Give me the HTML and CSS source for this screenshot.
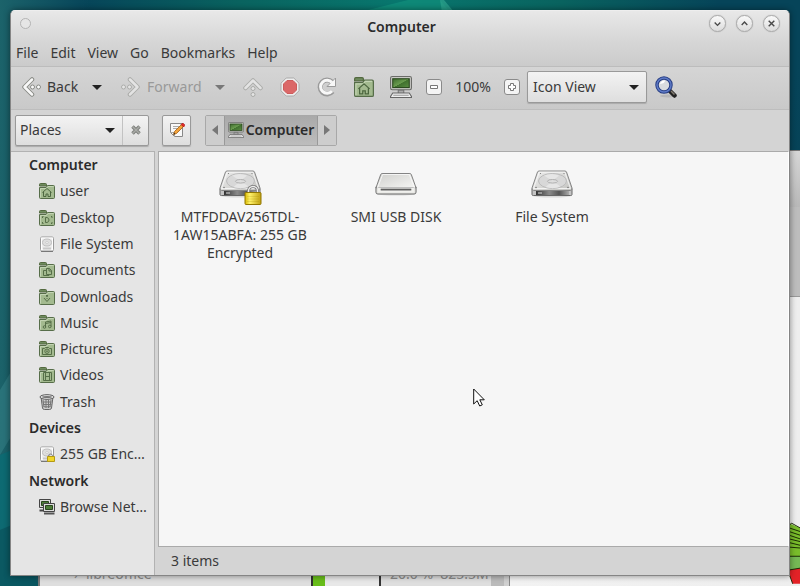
FILE: index.html
```html
<!DOCTYPE html>
<html lang="en">
<head>
<meta charset="utf-8">
<title>Computer</title>
<link rel="stylesheet" href="styles.css">
</head>
<body>
<svg class="defs" aria-hidden="true">
  <defs>
    <linearGradient id="face" x1="0" y1="0" x2="1" y2="1"><stop offset="0" stop-color="#ececec"/><stop offset=".5" stop-color="#d9d9d7"/><stop offset="1" stop-color="#c3c3c0"/></linearGradient>
    <linearGradient id="pale" x1="0" y1="0" x2="1" y2="1"><stop offset="0" stop-color="#cfcfcc"/><stop offset="1" stop-color="#f6f6f4"/></linearGradient>
    <linearGradient id="front" x1="0" y1="0" x2="1" y2="0"><stop offset="0" stop-color="#333"/><stop offset=".4" stop-color="#8a8a8a"/><stop offset=".7" stop-color="#555"/><stop offset="1" stop-color="#aaa"/></linearGradient>
    <linearGradient id="gold" x1="0" y1="0" x2="1" y2="0"><stop offset="0" stop-color="#d8b800"/><stop offset=".3" stop-color="#fff26a"/><stop offset="1" stop-color="#c0a010"/></linearGradient>
    <linearGradient id="screen" x1="0" y1="0" x2="1" y2="1"><stop offset="0" stop-color="#3c6a2c"/><stop offset=".5" stop-color="#6b9d50"/><stop offset=".52" stop-color="#40702e"/><stop offset="1" stop-color="#5a8d42"/></linearGradient>
    <symbol id="folder" viewBox="0 0 16 16">
      <path d="M.5 3V1.500Q.5.5 1.500.5h5Q7.500.5 7.500 1.500V3z" fill="#6f8b5e" stroke="#53693f"/>
      <path d="M.5 4.500 7 4.500 8.500 2.500H14.500Q15.500 2.500 15.500 3.500V14.500Q15.500 15.500 14.500 15.500H1.500Q.5 15.500.5 14.500z" fill="#a3ba8f" stroke="#566d49"/>
      <path d="M1.500 14.500V5.500H7.500L9 3.500h5.500" fill="none" stroke="#c3d4b3"/>
    </symbol>
    <symbol id="monitor" viewBox="0 0 20 20">
      <rect x=".5" y=".5" width="19" height="12" rx="1.500" fill="#c9c9c5" stroke="#6b6c69"/>
      <rect x="2.500" y="2.500" width="15" height="8" fill="url(#screen)" stroke="#2c4a20"/>
      <path d="M7.500 13h5v3h-5z" fill="#aaa" stroke="#777"/>
      <path d="M2.500 15.500h15l2 3v1H.5v-1z" fill="#eee" stroke="#666"/><path d="M3 17.500h14" stroke="#999"/>
    </symbol>
    <symbol id="hdd" viewBox="0 0 42 28">
      <ellipse cx="21" cy="25.500" rx="20" ry="2" fill="#bbb" opacity=".5"/>
      <path d="M1 18.500h40v6q0 1-1.500 1H2.500q-1.500 0-1.500-1z" fill="#c4c4c4" stroke="#666"/>
      <path d="M8 1h26q1 0 1.500 1L41 18q0 2.500-1.500 2.500H2.500Q1 20.500 1 18L6.500 2q.5-1 1.500-1z" fill="url(#face)" stroke="#858585"/>
      <path d="M8.200 2.200h25.600L39.500 18.500H2.500z" fill="none" stroke="#fafafa" stroke-opacity=".8"/>
      <ellipse cx="21.500" cy="11" rx="14" ry="7.500" fill="#d8d8d8" stroke="#bbb"/>
      <path d="M21.500 11 13 5.500q8-3 15 0zM21.500 11l8 5.500q-7 3-15 .5z" fill="#e6e6e6"/>
      <ellipse cx="21.500" cy="11.300" rx="5" ry="1.800" fill="#dedede" stroke="#b0b0b0"/>
      <path d="M5 21h33v4H5z" fill="url(#front)"/><path d="M7 23h4" stroke="#ddd"/>
      <circle cx="9.500" cy="3.500" r=".6" fill="#777"/><circle cx="33" cy="3.500" r=".6" fill="#777"/><circle cx="37" cy="17.500" r=".7" fill="#666"/><circle cx="5" cy="17.500" r=".7" fill="#666"/>
    </symbol>
    <symbol id="drive" viewBox="0 0 16 16">
      <rect x="1.500" y="1" width="13" height="14" rx="1.500" fill="#eee" stroke="#999"/>
      <rect x="2.500" y="2" width="11" height="12" fill="none" stroke="#fff"/>
      <ellipse cx="8" cy="6.500" rx="4.500" ry="3.500" fill="#dedede" stroke="#c0c0c0"/><ellipse cx="8" cy="6.500" rx="1.500" ry="1" fill="#eee" stroke="#bbb" stroke-width=".5"/>
      <path d="M4 11.500h8v2H4z" fill="#c8c8c8"/><path d="M2 15.300h12" stroke="#666"/>
    </symbol>
    <symbol id="lock" viewBox="0 0 18 20">
      <path d="M4.500 9V6a4.500 4.500 0 0 1 9 0v3" fill="none" stroke="#777" stroke-width="3"/>
      <path d="M4.500 9V6a4.500 4.500 0 0 1 9 0v3" fill="none" stroke="#eee" stroke-width="1.400"/>
      <rect x="1" y="7.500" width="16" height="12" rx="1" fill="url(#gold)" stroke="#917600"/>
      <path d="M3 11.500h12M3 14h12M3 16.500h12" stroke="#998000" stroke-opacity=".2"/>
    </symbol>
    <symbol id="arrow" viewBox="0 0 20 20">
      <path d="M11 2.500 3.500 10l7.500 7.500" fill="none" stroke="#888a85" stroke-width="4.500" stroke-linecap="round" stroke-linejoin="round"/>
      <path d="M11 2.500 3.500 10l7.500 7.500" fill="none" stroke="#f8f8f8" stroke-width="2.500" stroke-linecap="round" stroke-linejoin="round"/>
      <circle cx="11.500" cy="10" r="2" fill="#fafafa" stroke="#888a85"/><circle cx="17.500" cy="10" r="2" fill="#fafafa" stroke="#888a85"/>
    </symbol>
    <symbol id="house" viewBox="0 0 16 16"><path d="M3.500 9.500 8 5.500l4.500 4M4.500 9v4.500H7V11h2v2.500h2.500V9" fill="none" stroke="#4d6740"/></symbol>
  </defs>
</svg>

<svg class="rays" viewBox="0 0 800 586" preserveAspectRatio="none" aria-hidden="true">
  <path d="M360 12 408 0h32l10 12z" fill="#11907c" opacity=".7"/>
  <path d="M440 0h4l10 12h-12z" fill="#2da58e" opacity=".7"/>
  <path d="M0 390 12 370V435L0 455z" fill="#37848a" opacity=".5"/>
  <path d="M0 455l12-5V525L0 530z" fill="#057078" opacity=".6"/>
  <path d="M0 530l12-5 27 61H0z" fill="#04555f" opacity=".7"/>
</svg>
<div class="back-window monitor-window" aria-hidden="true"><div class="back-head"></div><div class="back-tabs"></div><div class="back-body"></div></div>
<div class="back-window list-window" aria-hidden="true">
  <span class="tick">›</span><span class="pkg">libreoffice</span><span class="meter"></span><span class="usage">20.0 %&nbsp; 825.5M</span><span class="scroll"></span>
</div>
<svg class="chart" viewBox="0 0 12 66" aria-hidden="true">
  <path d="M0 0 12 5V52H0z" fill="#79bd2b"/>
  <path d="M0 36h12v15H0z" fill="#75b955"/>
  <path d="M0 51 12 49V66H4L0 55z" fill="#e32227"/>
  <path d="M0 2 3 0l9 5M0 5l12 4M0 9l12 4M0 13l12 4M0 17l12 3M0 21l12 3M0 26l12 1M0 36h12M0 51l12-2M0 55l4 11" fill="none" stroke="#142000" stroke-width="1"/>
</svg>

<main class="window">
  <header class="titlebar">
    <button class="dot" aria-label="Window menu"></button>
    <h1>Computer</h1>
    <div class="controls">
      <button class="round" aria-label="Minimize"><svg viewBox="0 0 16 16"><path d="m5 7 3 3 3-3"/></svg></button>
      <button class="round" aria-label="Maximize"><svg viewBox="0 0 16 16"><path d="m5 9.500 3-3 3 3"/></svg></button>
      <button class="round" aria-label="Close"><svg viewBox="0 0 16 16"><path d="m5 5 6 6m0-6-6 6"/></svg></button>
    </div>
  </header>
  <nav class="menubar"><button>File</button><button>Edit</button><button>View</button><button>Go</button><button>Bookmarks</button><button>Help</button></nav>

  <div class="toolbar">
    <button class="nav-button"><svg class="i20"><use href="#arrow"/></svg>Back</button>
    <button class="drop" aria-label="Back history"><span class="caret"></span></button>
    <button class="nav-button forward" disabled><svg class="i20" viewBox="0 0 20 20"><use href="#arrow" transform="matrix(-1 0 0 1 20 0)" width="20" height="20"/></svg>Forward</button>
    <button class="drop faded" aria-label="Forward history" disabled><span class="caret"></span></button>
    <button class="tool faded" aria-label="Up" disabled><svg class="i20" viewBox="0 0 20 20"><use href="#arrow" transform="rotate(90 10 10)" width="20" height="20"/></svg></button>
    <button class="tool" aria-label="Stop"><svg class="i20" viewBox="0 0 20 20"><path d="M6.200 1h7.600L19 6.200v7.600L13.800 19H6.200L1 13.800V6.200z" fill="#eee" stroke="#aaa"/><path d="M7 3.500h6L16.500 7v6L13 16.500H7L3.500 13V7z" fill="#db6868" stroke="#cc5c5c"/></svg></button>
    <button class="tool" aria-label="Reload"><svg class="i20" viewBox="0 0 20 20"><path d="M15.500 14.500A7 7 0 1 1 15 5" fill="none" stroke="#9a9a9a" stroke-width="5"/><path d="M18.500 1v8.500H10z" fill="#f8f8f8" stroke="#9a9a9a"/><path d="M15 14A6.500 6.500 0 1 1 15 5.500" fill="none" stroke="#f8f8f8" stroke-width="3"/></svg></button>
    <button class="tool" aria-label="Home"><svg class="i20"><use href="#folder"/><use href="#house"/></svg></button>
    <button class="tool" aria-label="Computer"><svg class="i22"><use href="#monitor"/></svg></button>
    <button class="zoom" aria-label="Zoom out"><svg class="i16" viewBox="0 0 16 16"><rect x=".5" y=".5" width="15" height="15" rx="2.500" fill="#f4f4f4" stroke="#8a8a8a"/><path d="M4.500 6.500h7v3h-7z" fill="#fff" stroke="#777"/></svg></button>
    <output class="level">100%</output>
    <button class="zoom" aria-label="Zoom in"><svg class="i16" viewBox="0 0 16 16"><rect x=".5" y=".5" width="15" height="15" rx="2.500" fill="#f4f4f4" stroke="#8a8a8a"/><path d="M6.500 4.500h3v2h2v3h-2v2h-3v-2h-2v-3h2z" fill="#fff" stroke="#777"/></svg></button>
    <span class="combo view"><select aria-label="View mode"><option>Icon View</option></select><span class="caret"></span></span>
    <button class="tool" aria-label="Search"><svg class="i22" viewBox="0 0 22 22"><ellipse cx="13" cy="20" rx="8" ry="1.500" fill="#999" opacity=".4"/><path d="m14.500 14.500 5 5" stroke="#222" stroke-width="4.500" stroke-linecap="round"/><path d="m16 15 3.500 3.500" stroke="#817a70" stroke-width="1.500"/><circle cx="9" cy="9" r="7" fill="#d9dcdf" stroke="#273e84" stroke-width="3.500"/><circle cx="9" cy="9" r="7" fill="none" stroke="#5e7ac6" stroke-width="1.500"/><path d="M5 8q1-4 5-3.500 0 3-5 3.500z" fill="#fff"/></svg></button>
  </div>

  <div class="location">
    <div class="places"><span class="combo"><select aria-label="Side pane"><option>Places</option></select><span class="caret"></span></span><button class="shut" aria-label="Close side pane"><svg viewBox="0 0 12 12"><path d="m2.500 2.500 7 7m0-7-7 7" stroke="#7c7e7a" stroke-width="3.500"/><path d="m2.500 2.500 7 7m0-7-7 7" stroke="#a9aba7" stroke-width="1.500"/></svg></button></div>
    <button class="edit" aria-label="Edit location"><svg class="i16" viewBox="0 0 16 16"><path d="M1.500 1.500h12v13h-8l-4-4z" fill="#f8f8f8" stroke="#888"/><path d="M1.500 10.500h4v4M4 4.500h6M4 6.500h4" fill="none" stroke="#aaa"/><path d="m4.500 12.500 1-3L12.500 2.500l2 2L7.500 11.500z" fill="#f2a23a" stroke="#a05c12" stroke-width=".8"/><path d="m12 2.500 1-1h1.500l1 1V4l-1 1z" fill="#e22a2a" stroke="#a81010" stroke-width=".6"/><path d="m4.500 12.500.6-1.800 1.200 1.200z" fill="#222"/></svg></button>
    <div class="path">
      <button class="step" aria-label="Scroll left"><svg viewBox="0 0 6 10"><path d="M6 0v10L0 5z"/></svg></button>
      <button class="crumb"><svg class="i16"><use href="#monitor"/></svg>Computer</button>
      <button class="step" aria-label="Scroll right"><svg viewBox="0 0 6 10"><path d="M0 0v10l6-5z"/></svg></button>
    </div>
  </div>

  <div class="panes">
    <nav class="sidebar">
      <h2>Computer</h2>
      <a href="#"><svg class="i16"><use href="#folder"/><use href="#house"/></svg><span>user</span></a>
      <a href="#"><svg class="i16 mark" viewBox="0 0 16 16"><use href="#folder"/><path d="M6.500 7.500v5h1.500q2-.5 2-2.500t-2-2.500zM3.500 8V6.500h1M12 6.500h1V8M3.500 12v1.500h1M12 13.500h1V12"/></svg><span>Desktop</span></a>
      <a href="#"><svg class="i16"><use href="#drive"/></svg><span>File System</span></a>
      <a href="#"><svg class="i16 mark" viewBox="0 0 16 16"><use href="#folder"/><path d="M7.500 6.500h3l2 2v4h-5zM10 6.500V9h2.500M7 8.500H4.500v5H10V13"/></svg><span>Documents</span></a>
      <a href="#"><svg class="i16 mark" viewBox="0 0 16 16"><use href="#folder"/><path d="M7.500 6v1.500h1V6M5 9l3 3.500L11 9M7.500 9.500h1"/></svg><span>Downloads</span></a>
      <a href="#"><svg class="i16 mark" viewBox="0 0 16 16"><use href="#folder"/><path d="M6.500 12V7l5.500-1v5.500M6.500 8.500 12 7.500"/><circle cx="5.500" cy="12" r="1.300"/><circle cx="10.800" cy="11.500" r="1.300"/></svg><span>Music</span></a>
      <a href="#"><svg class="i16 mark" viewBox="0 0 16 16"><use href="#folder"/><path d="M3.500 7.500h2l1-1h3l1 1h2v6h-9z"/><circle cx="8" cy="10.200" r="2.200"/><circle cx="8" cy="10.200" r=".5"/></svg><span>Pictures</span></a>
      <a href="#"><svg class="i16 mark" viewBox="0 0 16 16"><use href="#folder"/><path d="M4.500 5.500h8v8h-8zM6.500 5.500v8M10.500 5.500v8M6.500 9.500h4"/></svg><span>Videos</span></a>
      <a href="#"><svg class="i16" viewBox="0 0 16 16"><path d="m2 3 1.500 11q.3 1.500 2 1.500h5q1.700 0 2-1.500L14 3z" fill="#ccc" stroke="#666"/><path d="m4 6 1 7M7 6v8M9.500 6v8M12 6l-1 7M3.500 8h9M4 10.500h8.500M4.500 12.800h7" stroke="#777" fill="none"/><ellipse cx="8" cy="3" rx="7" ry="2.300" fill="#eee" stroke="#555"/><ellipse cx="8" cy="3" rx="5" ry="1" fill="#777"/></svg><span>Trash</span></a>
      <h2>Devices</h2>
      <a href="#"><svg class="i16" viewBox="0 0 16 16"><use href="#drive"/><path d="M9.500 11v-1a2 2 0 0 1 4 0v1" fill="none" stroke="#888"/><path d="M8.500 10.500h7v5h-7z" fill="#f1d62a" stroke="#b59a12"/></svg><span>255 GB Enc…</span></a>
      <h2>Network</h2>
      <a href="#"><svg class="i16" viewBox="0 0 16 16"><path d="M.5.5h11v8H.5z" fill="#ddd" stroke="#444"/><path d="M2.500 2.500h7v4h-7z" fill="#4c7d38" stroke="#29451d"/><path d="M.5 11.500h4" stroke="#444" stroke-width="2"/><path d="M4.500 4.500h11v8h-11z" fill="#ddd" stroke="#444"/><path d="M6.500 6.500h7v4h-7z" fill="#4c7d38" stroke="#29451d"/><path d="M5 14.500h10.500" stroke="#555" stroke-width="2"/></svg><span>Browse Net…</span></a>
    </nav>
    <section class="main">
      <div class="files">
        <a href="#" class="file"><span class="art"><svg class="disk"><use href="#hdd"/></svg><svg class="badge"><use href="#lock"/></svg></span><span>MTFDDAV256TDL-1AW15ABFA: 255 GB Encrypted</span></a>
        <a href="#" class="file"><span class="art"><svg class="disk" viewBox="0 0 44 28"><ellipse cx="22" cy="24" rx="21" ry="2" fill="#bbb" opacity=".5"/><path d="M1 17h42v5.500q0 2-2 2H3q-2 0-2-2z" fill="#e4e4e0" stroke="#666"/><path d="M7.500 3h29q1 0 1.500 1L43 18H1L6 4q.5-1 1.500-1z" fill="url(#pale)" stroke="#7a7a7a"/><path d="M8 4h28L41.500 18.500h-39z" fill="none" stroke="#fafafa" stroke-opacity=".9"/><path d="M3 18h38v5H3z" fill="#f0f0ed"/><path d="M6 19.500h32" stroke="#111"/><path d="M6 20.500h32" stroke="#888"/></svg></span><span>SMI USB DISK</span></a>
        <a href="#" class="file"><span class="art"><svg class="disk"><use href="#hdd"/></svg></span><span>File System</span></a>
      </div>
      <footer class="status">3 items</footer>
    </section>
  </div>
</main>
<svg class="pointer" viewBox="0 0 12 19" aria-hidden="true"><path d="M.7 1v15l3.500-3.300 2.500 5.300 2.600-1.200-2.500-5h4.500z" fill="#fff" stroke="#111"/></svg>
</body>
</html>
```
FILE: styles.css
```css
* { box-sizing: border-box; }

body {
  margin: 0;
  padding: 10px;
  min-height: 100vh;
  display: flex;
  position: relative;
  overflow: hidden;
  font: 14px/18px "Noto Sans", "Open Sans", sans-serif;
  color: #3a3a3a;
  background:
    linear-gradient(90deg, rgba(30, 102, 108, .9) 0, transparent 90px),
    radial-gradient(circle at 50% 0, #08776e 0, #09635f 160px, #064459 320px, #064459 400px, #053e50 600px);
}

button, select { font: inherit; color: inherit; margin: 0; padding: 0; border: 0; background: none; }
button { display: flex; align-items: center; justify-content: center; }
a { color: inherit; text-decoration: none; }
h1, h2 { margin: 0; font-size: 14px; font-weight: 600; color: #2b2b2b; }
svg { display: block; flex: none; }

.defs { position: absolute; width: 0; height: 0; }
.rays { position: absolute; left: 0; top: 0; width: 100%; height: 100%; }
.i16 { width: 16px; height: 16px; }
.i20 { width: 20px; height: 20px; }
.i22 { width: 22px; height: 22px; }
.caret { border: 5px solid transparent; border-top-color: #222; border-bottom: 0; }

/* Windows lying behind the file manager */
.back-window { position: absolute; color: #8a8a8a; }
.monitor-window { left: 510px; right: 0; top: 150px; bottom: 0; display: flex; flex-direction: column; border-top: 1px solid #777; }
.back-head { height: 56px; background: linear-gradient(#d6d6d6, #b8b8b8); }
.back-tabs { height: 90px; background: #bdbdbd; border-bottom: 1px solid #999; }
.back-body { flex: 1; background: linear-gradient(90deg, #f2f2f2, #eee); }
.list-window { left: 38px; right: 290px; bottom: 0; height: 21px; display: flex; background: #dedede; border-left: 2px solid #777; border-right: 1px solid #888; }
.tick { width: 46px; padding-left: 34px; }
.pkg { width: 225px; }
.meter { width: 70px; border: 2px solid #333; border-width: 0 2px; background: linear-gradient(90deg, #68bd1a 12px, #e8e8e8 12px); }
.usage { flex: 1; padding-left: 9px; white-space: nowrap; }
.scroll { width: 18px; background: #bbb; border-right: 5px solid #d0d0d0; }
.chart { position: absolute; right: 0; bottom: 0; width: 11px; height: 65px; }

/* File manager frame */
.window {
  position: relative;
  flex: 1;
  min-width: 0;
  display: flex;
  flex-direction: column;
  border: 1px solid #858585;
  border-top-color: #eee;
  border-radius: 5px 5px 0 0;
  background: #d4d4d4;
  box-shadow: 0 0 6px rgba(0, 0, 0, .45);
  overflow: hidden;
}
.titlebar { display: grid; grid-template-columns: 1fr auto 1fr; height: 31px; padding: 0 9px 0 12px; background: linear-gradient(#e8e8e8, #d6d6d6); }
.titlebar h1 { align-self: center; }
.dot { width: 11px; height: 11px; margin: 7px -3px 0; border: 1px solid #b4b4b4; border-radius: 50%; background: #e6e6e6; }
.controls { display: flex; gap: 10px; justify-content: flex-end; padding-top: 4px; }
.round { width: 17px; height: 17px; border: 1px solid #aaa; border-radius: 50%; background: linear-gradient(#fafafa, #dcdcdc); box-shadow: 0 0 1px #999; }
.round svg { width: 15px; height: 15px; fill: none; stroke: #4a4a4a; stroke-width: 1.5; }
.menubar { display: flex; gap: 12px; height: 25px; padding: 0 5px 3px; background: linear-gradient(#d6d6d6, #cbcbcb); border-bottom: 1px solid #bcbcbc; }

.toolbar { display: flex; align-items: center; height: 43px; background: linear-gradient(#d5d5d5, #c9c9c9); border-bottom: 1px solid #bdbdbd; padding-bottom: 2px; }
.nav-button { width: 71px; gap: 6px; justify-content: flex-start; padding-left: 10px; }
.forward { width: 94px; color: #999; }
.forward svg, .faded { opacity: .5; }
.drop { width: 29px; height: 30px; }
.tool { width: 37px; height: 30px; }
.zoom { width: 30px; height: 30px; }
.level { width: 48px; text-align: center; }
.combo { display: grid; align-items: center; }
.combo > * { grid-area: 1 / 1; }
.combo .caret { justify-self: end; margin-right: 7px; pointer-events: none; }
.combo select { appearance: none; width: 100%; height: 100%; padding-left: 5px; }
.view, .places, .edit { border: 1px solid #999; border-radius: 2px; background: linear-gradient(#f3f3f3, #dedede); box-shadow: 0 1px 1px #aaa; }
.view { width: 120px; height: 32px; }

.location { display: flex; align-items: center; height: 41px; padding: 0 4px 1px; }
.places { display: flex; width: 134px; height: 31px; margin-right: 13px; }
.places .combo { flex: 1; }
.places select { padding-left: 4px; }
.shut { width: 26px; border-left: 1px solid #c2c2c2; }
.shut svg { width: 12px; height: 12px; }
.edit { width: 29px; height: 31px; margin-right: 14px; }
.path { display: flex; height: 31px; border: 1px solid #a8a8a8; border-radius: 2px; }
.step { width: 18px; background: #cdcdcd; }
.step svg { width: 6px; height: 10px; fill: #777; }
.crumb { width: 94px; gap: 2px; font-weight: 600; color: #2b2b2b; background: linear-gradient(#a9a9a9, #bdbdbd); border: 1px solid #999; border-width: 0 1px; }

.panes { flex: 1; display: flex; min-height: 0; }
.sidebar { width: 144px; display: grid; grid-auto-rows: 1fr; align-items: center; padding-bottom: 55px; background: #e5e5e5; border: 1px solid #b2b2b2; border-left: 0; border-bottom: 0; }
.sidebar h2 { padding-left: 18px; }
.sidebar a { display: flex; align-items: center; gap: 5px; padding-left: 28px; white-space: nowrap; }
.mark path, .mark circle { fill: none; stroke: #566f48; }
.main { flex: 1; display: flex; flex-direction: column; padding-left: 3px; }
.files { flex: 1; display: grid; grid-template-columns: repeat(auto-fill, 156px); align-content: start; padding: 18px 3px; background: #f6f6f6; border: 1px solid #aaa; border-right-color: #fff; }
.file { display: flex; flex-direction: column; align-items: center; text-align: center; padding: 0 10px; }
.art { position: relative; height: 38px; }
.disk { width: 42px; height: 28px; }
.badge { position: absolute; right: -1px; top: 15px; width: 18px; height: 20px; }
.status { height: 28px; padding: 5px 13px; }

.pointer { position: absolute; left: 473px; top: 388px; width: 12px; height: 19px; }
```
